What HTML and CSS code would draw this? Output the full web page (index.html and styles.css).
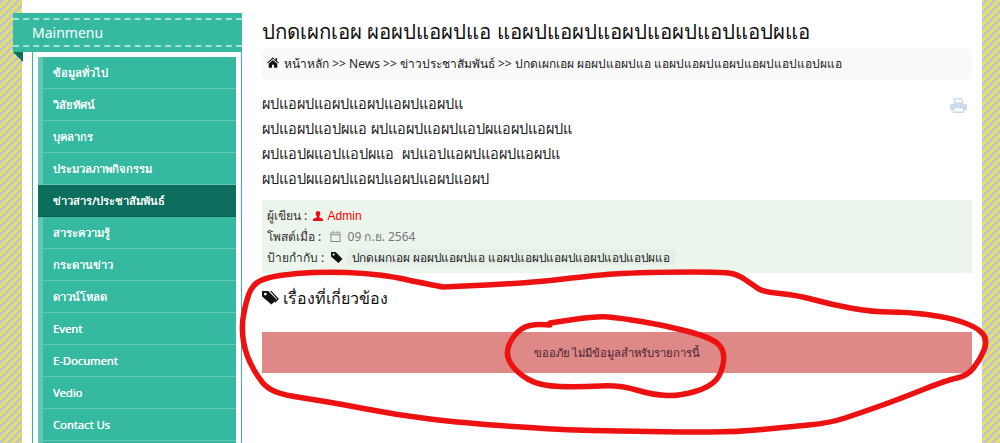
FILE: index.html
```html
<!DOCTYPE html>
<html lang="th">
<head>
  <meta charset="UTF-8">
  <title>News</title>
  <link rel="stylesheet" href="styles.css">
</head>
<body>
  <div class="page">
    <!-- Sidebar -->
    <aside class="sidebar">
      <div class="menu-title">
        <span>Mainmenu</span>
        <i class="menu-fold"></i>
      </div>
      <div class="menu-box">
        <ul class="menu-list">
          <li>ข้อมูลทั่วไป</li>
          <li>วิสัยทัศน์</li>
          <li>บุคลากร</li>
          <li>ประมวลภาพกิจกรรม</li>
          <li class="active">ข่าวสาร/ประชาสัมพันธ์</li>
          <li>สาระความรู้</li>
          <li>กระดานข่าว</li>
          <li>ดาวน์โหลด</li>
          <li>Event</li>
          <li>E-Document</li>
          <li>Vedio</li>
          <li>Contact Us</li>
        </ul>
      </div>
    </aside>

    <!-- Article -->
    <main class="content">
      <h1 class="title">ปกดเผกเอผ ผอผปแอผปแอ แอผปแอผปแอผปแอผปแอปแอปผแอ</h1>
      <div class="breadcrumb">
        <svg class="icon-home" viewBox="0 0 14 12"><path d="M7 0 0 6.200l.8.9L7 1.700l6.200 5.400.8-.9-2.300-2V1h-2v2.300zM2 7.400V12h3.800V8.500h2.400V12H12V7.400L7 3z"/></svg>
        หน้าหลัก &gt;&gt; News &gt;&gt; ข่าวประชาสัมพันธ์ &gt;&gt; ปกดเผกเอผ ผอผปแอผปแอ แอผปแอผปแอผปแอผปแอปแอปผแอ
      </div>

      <div class="article">
        <svg class="icon-print" viewBox="0 0 18 16"><path d="M4 0h8l2 2v4H4zm1.500 1.500v3.200h7V2.600l-1-1.100zM2 6h14a2 2 0 0 1 2 2v5h-3v3H3v-3H0V8a2 2 0 0 1 2-2zm2.500 5v3.500h9V11z"/></svg>
        <p>ผปแอผปแอผปแอผปแอผปแอผปแ</p>
        <p>ผปแอผปแอปผแอ ผปแอผปแอผปแอปผแอผปแอผปแ</p>
        <p>ผปแอปผแอปแอปผแอ&nbsp; ผปแอปแอผปแอผปแอผปแ</p>
        <p>ผปแอปผแอผปแอผปแอผปแอผปแอผป</p>
      </div>

      <div class="meta">
        <div class="meta-row">ผู้เขียน :
          <svg class="icon-user" viewBox="0 0 12 12"><path d="M6 0c1.800 0 2.800 1.300 2.800 3.200 0 1.300-.6 2.500-1.300 3.100v1.200L12 9.700V12H0V9.700l4.500-2.200V6.300C3.800 5.700 3.200 4.500 3.200 3.200 3.200 1.300 4.200 0 6 0z"/></svg>
          <span class="author">Admin</span>
        </div>
        <div class="meta-row">โพสต์เมื่อ :
          <svg class="icon-cal" viewBox="0 0 12 12"><path d="M3 0h1v1.500h4V0h1v1.500h2.500V12H.5V1.500H3zM1.500 4.500v6.500h9V4.500zm0-2V3.500h9v-1z"/></svg>
          <span class="date">09 ก.ย. 2564</span>
        </div>
        <div class="meta-row">ป้ายกำกับ :
          <svg class="icon-tag" viewBox="0 0 13 12"><path d="M0 0h5l7.500 7.500L8 12 0 5zm2.800 1.600a1.200 1.200 0 1 0 0 2.400 1.200 1.200 0 0 0 0-2.400z"/></svg>
          <span class="tag-label">ปกดเผกเอผ ผอผปแอผปแอ แอผปแอผปแอผปแอผปแอปแอปผแอ</span>
        </div>
      </div>

      <h2 class="related">
        <svg class="icon-tags" viewBox="0 0 18 16"><path d="M0 1h6.500l9 9-5.500 5.500L0 7zm3.500 1.800a1.500 1.500 0 1 0 0 3 1.500 1.500 0 0 0 0-3z"/><path d="M8.500 1h1.500l8 8.500-4 4-1-1 3-3z"/></svg>
        เรื่องที่เกี่ยวข้อง
      </h2>
      <div class="alert">ขออภัย ไม่มีข้อมูลสำหรับรายการนี้</div>
    </main>
  </div>

  <!-- Red marker scribbles drawn over the page -->
  <svg class="scribble" viewBox="0 0 1000 443">
    <path d="M443,287 Q417,282 406,279.500 Q395,277 379,275 Q363,273 346.500,272.500 Q330,272 313.500,272.500 Q297,273 280,275.500 Q263,278 256.500,283 Q250,288 246.500,301.500 Q243,315 242.500,324 Q242,333 243.500,341.500 Q245,350 247.500,356.500 Q250,363 254,370 Q258,377 262.500,382.500 Q267,388 275,391.500 Q283,395 306.500,398.500 Q330,402 363.500,408.500 Q397,415 430,419 Q463,423 513,426.500 Q563,430 591.500,430.500 Q620,431 650,431.500 Q680,432 708.500,432 Q737,432 762,429.500 Q787,427 808.500,425 Q830,423 845,418 Q860,413 878.500,406.500 Q897,400 922,390 Q947,380 957,378 Q967,376 973.500,368 Q980,360 984,350 Q988,340 982.500,333.500 Q977,327 962,322 Q947,317 927,314.500 Q907,312 890,312 Q873,312 853,308.500 Q833,305 815,300 Q797,295 780,293.500 Q763,292 758,288.500 Q753,285 745,279.500 Q737,274 728.500,273 Q720,272 695,272 Q670,272 650,272.500 Q630,273 613.500,274 Q597,275 563.500,279 Q530,283 486.500,285 L443,287"/>
    <path d="M550,325 Q530,323 521.500,329 Q513,335 509,345 Q505,355 511,364 Q517,373 528.500,379.500 Q540,386 560,386.500 Q580,387 600,386 Q620,385 636.500,390 Q653,395 666.500,395.500 Q680,396 695,391.500 Q710,387 716,380 Q722,373 723.500,361.500 Q725,350 717.500,343.500 Q710,337 686.500,331 Q663,325 641.500,321.500 Q620,318 608.500,317 Q597,316 573.500,319.500 L550,323"/>
  </svg>
</body>
</html>
```

FILE: styles.css
```css
/* Base */
body {
  margin: 0;
  height: 443px;
  overflow: hidden;
  font-family: Tahoma, "Noto Sans", "DejaVu Sans", sans-serif;
  font-size: 12px;
  color: #333;
  background-color: #cfcf8c;
  background-image: linear-gradient(135deg, #c6c6c6 0, #c6c6c6 36%, #e8e84e 36%, #e8e84e 50%, #c6c6c6 50%, #c6c6c6 86%, #e8e84e 86%, #e8e84e 100%);
  background-size: 8px 8px;
}
.page {
  display: flex;
  margin: 0 18px 0 22px;
  height: 443px;
  background: #fff;
}

/* Sidebar */
.sidebar { width: 229px; margin: 13px 0 0 -9px; flex: none; }
.menu-title {
  position: relative;
  height: 39px;
  box-sizing: border-box;
  background: #35b9a0;
  padding: 5px 0;
}
.menu-title span {
  display: block;
  height: 25px;
  line-height: 25px;
  padding-left: 19px;
  border-top: 2px dashed #a8e0d4;
  border-bottom: 2px dashed #a8e0d4;
  color: #fff;
  font-size: 14px;
}
.menu-fold {
  position: absolute;
  left: 0;
  top: 39px;
  border-top: 10px solid #0c6f5e;
  border-left: 10px solid transparent;
}
.menu-box {
  box-sizing: border-box;
  height: 391px;
  margin-left: 19px;
  padding: 5px 5px 0;
  border: solid #35b9a0;
  border-width: 0 1px;
  overflow: hidden;
}
.menu-list {
  list-style: none;
  margin: 0;
  padding: 0;
  height: 100%;
  background: #35b9a0;
  border-left: 5px solid #62c7b3;
}
.menu-list li {
  height: 31px;
  line-height: 31px;
  padding-left: 10px;
  border-bottom: 1px solid #62c7b3;
  color: #fff;
  font-size: 11.200px;
  text-shadow: 0.3px 0 0 #fff;
}
.menu-list li.active {
  background: #0c6f5e;
  margin-left: -5px;
  padding-left: 15px;
  border-bottom-color: #0a5a4c;
}

/* Article */
.content { flex: 1; padding: 0 10px 0 20px; min-width: 0; }
.title { margin: 19px 0 0; font-size: 20.400px; line-height: 24px; font-weight: normal; color: #111; white-space: nowrap; }
.breadcrumb {
  margin-top: 5px;
  height: 32px;
  line-height: 32px;
  padding-left: 5px;
  background: #f9f9f9;
  border-radius: 6px;
  color: #222;
  white-space: nowrap;
}
.icon-home { width: 12px; height: 11px; fill: #111; margin-right: 2px; }
.article { position: relative; margin-top: 11px; height: 109px; font-size: 14.500px; color: #222; }
.article p { margin: 0; line-height: 25px; }
.icon-print { position: absolute; top: 7px; right: 5px; width: 17px; height: 15px; fill: #c9dcec; }
.meta { height: 73px; box-sizing: border-box; padding: 5px; background: #ebf5ec; color: #333; }
.meta-row { height: 21px; line-height: 21px; white-space: nowrap; }
.meta-row svg { margin: 0 3px 0 6px; vertical-align: -1px; }
.meta-row .icon-user { margin: 0 1px 0 3px; }
.meta-row .icon-tag { margin: 0 0 0 4px; }
.icon-user { width: 10px; height: 10px; fill: #e8101c; }
.author { color: #f00; font-family: "Liberation Sans", sans-serif; }
.icon-cal { width: 11px; height: 11px; fill: #888; }
.date { color: #777; }
.icon-tag { width: 12px; height: 11px; fill: #111; }
.tag-label { background: #e6efe7; padding: 0 5px; color: #222; font-size: 11.800px; }
.related { margin: 15px 0 0; height: 21px; line-height: 21px; font-size: 16px; font-weight: normal; color: #111; }
.icon-tags { width: 17px; height: 15px; fill: #111; vertical-align: -1px; }
.alert {
  margin-top: 23px;
  height: 41px;
  line-height: 41px;
  text-align: center;
  background: #de8888;
  color: #4a2530;
  font-size: 11.300px;
}

/* Marker overlay */
.scribble {
  position: absolute;
  left: 0;
  top: 0;
  width: 1000px;
  height: 443px;
  fill: none;
  stroke: #ee1111;
  stroke-width: 5.500;
  stroke-linejoin: round;
  stroke-linecap: round;
  filter: blur(0.4px);
  pointer-events: none;
}
```
